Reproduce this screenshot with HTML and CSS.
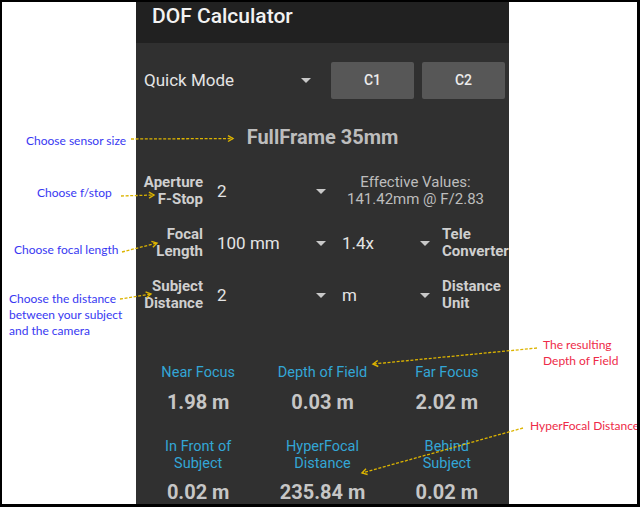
FILE: index.html
```html
<!DOCTYPE html>
<html>
<head>
<meta charset="utf-8">
<link rel="stylesheet" href="styles.css">
</head>
<body>
<div class="frame">
  <div class="side side-left">
    <div class="note n-sensor">Choose sensor size</div>
    <div class="note n-fstop">Choose f/stop</div>
    <div class="note n-focal">Choose focal length</div>
    <div class="note n-dist">Choose the distance<br>between your subject<br>and the camera</div>
  </div>

  <div class="phone">
    <div class="appbar"><span class="title">DOF Calculator</span></div>

    <div class="mode-row">
      <div class="select mode-select"><span>Quick Mode</span><span class="caret"></span></div>
      <div class="btn">C1</div>
      <div class="btn">C2</div>
    </div>

    <div class="sensor">FullFrame 35mm</div>

    <div class="param-row">
      <div class="plabel">Aperture<br>F-Stop</div>
      <div class="select dd1"><span>2</span><span class="caret"></span></div>
      <div class="effective">Effective Values:<br>141.42mm @ F/2.83</div>
    </div>

    <div class="param-row">
      <div class="plabel">Focal<br>Length</div>
      <div class="select dd1"><span>100 mm</span><span class="caret"></span></div>
      <div class="select dd2"><span>1.4x</span><span class="caret"></span></div>
      <div class="plabel2">Tele<br>Converter</div>
    </div>

    <div class="param-row">
      <div class="plabel">Subject<br>Distance</div>
      <div class="select dd1"><span>2</span><span class="caret"></span></div>
      <div class="select dd2"><span>m</span><span class="caret"></span></div>
      <div class="plabel2">Distance<br>Unit</div>
    </div>

    <div class="results first">
      <div class="rlabel">Near Focus</div>
      <div class="rlabel">Depth of Field</div>
      <div class="rlabel">Far Focus</div>
      <div class="rvalue">1.98 m</div>
      <div class="rvalue">0.03 m</div>
      <div class="rvalue">2.02 m</div>
    </div>

    <div class="results second">
      <div class="rlabel">In Front of<br>Subject</div>
      <div class="rlabel">HyperFocal<br>Distance</div>
      <div class="rlabel">Behind<br>Subject</div>
      <div class="rvalue">0.02 m</div>
      <div class="rvalue">235.84 m</div>
      <div class="rvalue">0.02 m</div>
    </div>
  </div>

  <div class="side side-right">
    <div class="note red n-dof">The resulting<br>Depth of Field</div>
    <div class="note red n-hyper">HyperFocal Distance</div>
  </div>

  <svg class="arrows" width="640" height="507" viewBox="0 0 640 507">
    <defs>
      <marker id="head" markerWidth="8" markerHeight="8" refX="6" refY="4" orient="auto" markerUnits="userSpaceOnUse">
        <path d="M1,1 L6,4 L1,7" fill="none" stroke="#dcb400" stroke-width="1.4"/>
      </marker>
    </defs>
    <g stroke="#dcb400" stroke-width="1.3" stroke-dasharray="3 1.6" fill="none" marker-end="url(#head)">
      <line x1="131" y1="139" x2="233" y2="138.5"/>
      <line x1="121" y1="196" x2="154" y2="195"/>
      <line x1="122" y1="252" x2="157" y2="243"/>
      <line x1="120" y1="299" x2="151" y2="294"/>
      <line x1="537" y1="348" x2="373" y2="364"/>
      <line x1="523" y1="428" x2="362" y2="473"/>
    </g>
  </svg>
</div>
</body>
</html>
```

FILE: styles.css
```css
html, body {
  margin: 0;
  padding: 0;
  background: #fff;
}

.frame {
  position: relative;
  width: 640px;
  height: 507px;
  box-sizing: border-box;
  border: 2px solid #000;
  border-right-width: 3px;
  border-bottom-width: 3px;
  display: flex;
  background: #fff;
  overflow: hidden;
  font-family: Roboto, "Liberation Sans", sans-serif;
}

.side {
  display: flex;
  flex-direction: column;
  background: #fff;
}

.side-left {
  width: 134px;
  flex-shrink: 0;
}

.side-right {
  flex: 1;
  min-width: 0;
}

.note {
  font-family: Lato, "Open Sans", sans-serif;
  font-size: 12px;
  line-height: 16px;
  color: #3838f2;
  white-space: nowrap;
}

.note.red {
  color: #ee2a48;
}

.n-sensor { margin-top: 131px; padding-left: 24px; }
.n-fstop { margin-top: 36px; padding-left: 35px; }
.n-focal { margin-top: 41px; padding-left: 12px; }
.n-dist { margin-top: 33px; padding-left: 7px; }

.n-dof { margin-top: 335px; padding-left: 34px; }
.n-hyper { margin-top: 49px; padding-left: 21px; }

.phone {
  width: 373px;
  flex-shrink: 0;
  background: #303030;
  display: flex;
  flex-direction: column;
}

.appbar {
  height: 41px;
  background: #212121;
  padding-left: 16px;
  box-sizing: border-box;
  padding-top: 1px;
}

.title {
  font-size: 21px;
  line-height: 26px;
  font-weight: 500;
  color: #f2f2f2;
}

.mode-row {
  margin-top: 19px;
  height: 37px;
  display: flex;
  align-items: center;
  padding: 0 4px 0 8px;
  gap: 8px;
}

.select {
  display: flex;
  align-items: center;
  justify-content: space-between;
  color: #e4e4e4;
  font-size: 17px;
}

.mode-select {
  flex: 1;
  padding-right: 6px;
  margin-right: 6px;
}

.caret {
  width: 0;
  height: 0;
  border-left: 5px solid transparent;
  border-right: 5px solid transparent;
  border-top: 5px solid #c8c8c8;
}

.btn {
  width: 83px;
  height: 37px;
  background: #575757;
  border-radius: 2px;
  color: #ececec;
  font-size: 14px;
  font-weight: 500;
  display: flex;
  align-items: center;
  justify-content: center;
}

.sensor {
  margin-top: 26px;
  height: 24px;
  line-height: 24px;
  text-align: center;
  font-size: 20px;
  font-weight: 700;
  color: #bdbdbd;
}

.param-row {
  display: grid;
  grid-template-columns: 67px 115px 88px 67px;
  column-gap: 12px;
  align-items: center;
  height: 34px;
  margin-top: 18px;
}

.sensor + .param-row {
  margin-top: 25.5px;
}

.plabel {
  text-align: right;
  font-size: 15px;
  line-height: 17px;
  font-weight: 700;
  color: #cfcfcf;
}

.plabel2 {
  font-size: 15px;
  line-height: 17px;
  font-weight: 700;
  color: #cfcfcf;
  white-space: nowrap;
}

.dd1 {
  padding-left: 2px;
  padding-right: 4px;
}

.dd2 {
  padding-right: 0;
}

.effective {
  grid-column: 3 / 5;
  text-align: center;
  padding-right: 20px;
  font-size: 15px;
  line-height: 17px;
  color: #bdbdbd;
  white-space: nowrap;
}

.results {
  display: grid;
  grid-template-columns: 1fr 1fr 1fr;
  text-align: center;
}

.results.first {
  margin-top: 52px;
}

.results.second {
  margin-top: 24px;
}

.rlabel {
  font-size: 14.5px;
  line-height: 17px;
  color: #33a6d6;
  padding-bottom: 8.5px;
}

.rvalue {
  font-size: 20px;
  line-height: 24px;
  font-weight: 700;
  color: #c6c6c6;
}

.arrows {
  position: absolute;
  left: -2px;
  top: -2px;
  pointer-events: none;
}
```
